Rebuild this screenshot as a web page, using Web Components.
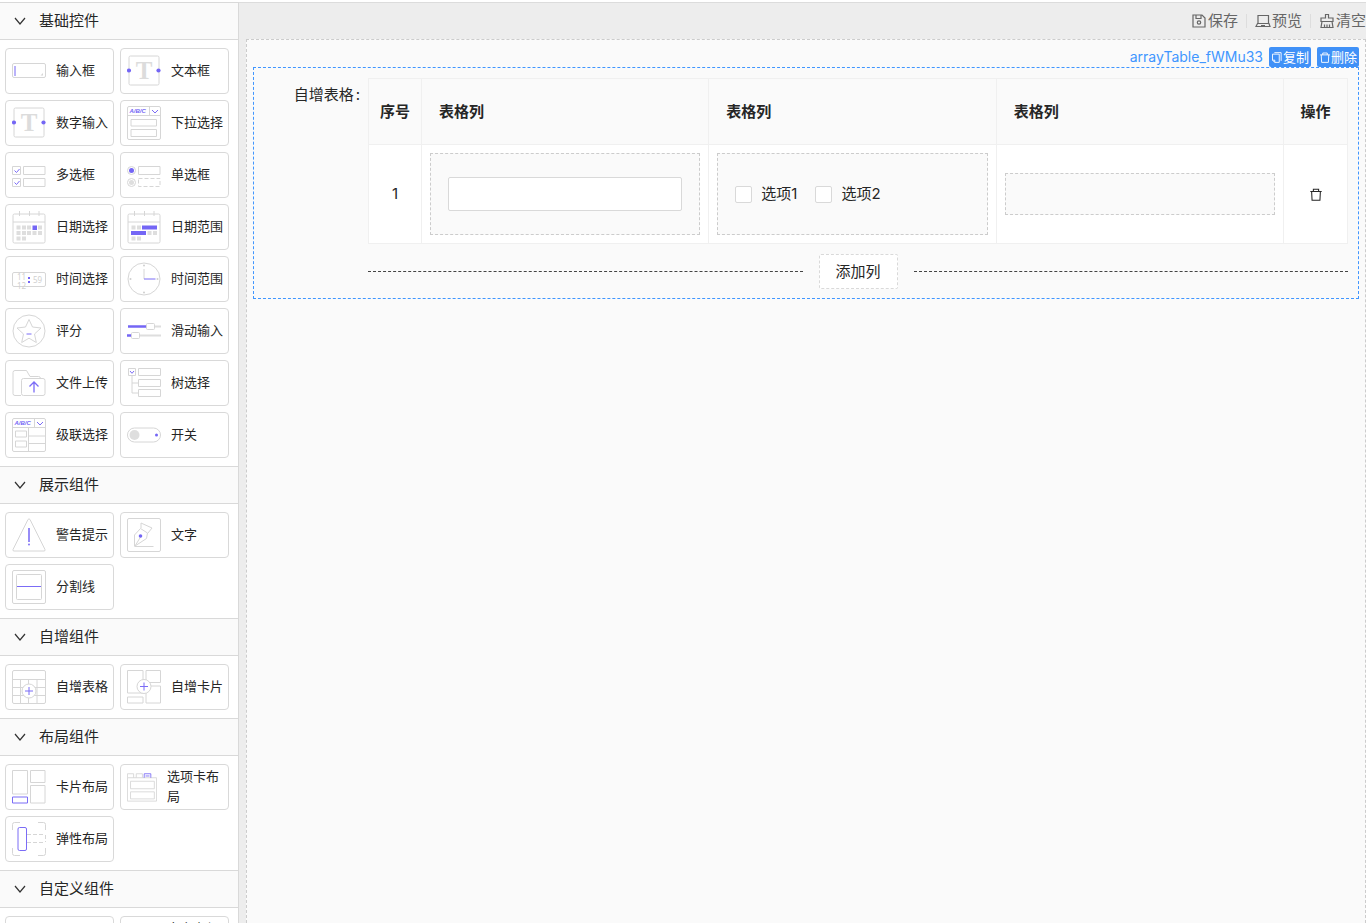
<!DOCTYPE html>
<html lang="zh-CN">
<head>
<meta charset="utf-8">
<title>表单设计器</title>
<style>
html, body { margin: 0; height: 100%; }
body { font: 15px/22px Inter, "Noto Sans CJK SC", sans-serif; color: #262626; overflow: hidden; }
</style>
</head>
<body>
<form-designer></form-designer>
<script>
const G = 'fill="none" stroke="#d6d6d6"';
const P = 'fill="none" stroke="#7b6cf6"';
const letterT = `<rect x="2" y="2" width="30" height="29" rx="1.5" ${G}/><text x="17" y="25" text-anchor="middle" font-family="Liberation Serif" font-weight="700" font-size="25" fill="#dcdcdc">T</text><circle cx="2" cy="16.500" r="2.100" fill="#7466f5"/><circle cx="31.500" cy="16.500" r="2.100" fill="#7466f5"/>`;
const abc = `<rect x=".5" y=".5" width="33" height="33" rx="1.500" ${G}/><path d="M.5 9.500H33.500M22.500.5V9.500" ${G}/><text x="2.500" y="7.200" font-family="Liberation Sans" font-style="italic" font-weight="700" font-size="6" fill="#7466f5">A/B/C</text><path d="M25 4l3 3 3-3" ${P}/>`;
const calendar = `<rect x="1" y="4" width="32" height="29" rx="1.500" ${G}/><path d="M1 12H33M7.500 1V6M17.500 1V6M27 1V6" ${G}/>`;
const squares = list => list.map(([x, y]) => `<rect x="${x}" y="${y}" width="4" height="4" fill="#dedede"/>`).join('');
const ICONS = {
  input: `<rect x=".5" y="9.500" width="33" height="14" rx="1.500" ${G}/><path d="M3 12V22" stroke="#7466f5"/><path d="M28.500 21.500l2.500-2.500v2.500z" fill="#d6d6d6"/>`,
  letter: letterT,
  select: abc + `<path d="M4 13.500H29.500V20H4zM4 23.500H29.500V30.500H4z" ${G}/>`,
  checks: `<path d="M.5 8.500h8v8h-8zM.5 20.500h8v8h-8zM11.500 8.500h21.500v8h-21.500zM11.500 20.500h21.500v8h-21.500z" ${G}/><path d="M2.500 12.500l2 2 3-3.500M2.500 24.500l2 2 3-3.500" ${P}/>`,
  radios: `<circle cx="4.500" cy="12.500" r="4" ${G}/><circle cx="4.500" cy="12.500" r="2.500" fill="#7466f5"/><circle cx="4.500" cy="24.500" r="4" ${G}/><circle cx="4.500" cy="24.500" r="2.500" fill="#dedede"/><path d="M11.500 8.500h21.500v8h-21.500z" ${G}/><path d="M11.500 20.500h21.500v8h-21.500z" ${G} stroke-dasharray="4 2"/>`,
  date: calendar + squares([[4.500,15.500],[10,15.500],[15,15.500],[26,15.500],[4.500,21],[10,21],[15,21],[20.500,21],[26,21],[4.500,26.500],[10,26.500]]) + `<rect x="20.500" y="15.500" width="4.500" height="4.500" fill="#7466f5"/>`,
  dates: calendar + squares([[4.500,15.500],[10,15.500],[20.500,21],[26,21],[4.500,26.500],[10,26.500]]) + `<path d="M15 15.500h15v4h-15zM4 21h15v4h-15z" fill="#7466f5"/>`,
  time: `<rect x=".5" y="10.500" width="33" height="14" rx="1.500" ${G}/><g font-family="Noto Sans" font-size="8" fill="#d0d0d0"><svg x="0" y="10" width="34" height="14"><text x="5" y="8">11</text><text x="5" y="17">12</text></svg><text x="21" y="20.500">59</text></g><path d="M16 15h2v2h-2zM16 19h2v2h-2z" fill="#7466f5"/>`,
  clock: `<circle cx="17" cy="17" r="16" ${G}/><path d="M17 7V17" ${G}/><path d="M17 17H28.500" ${P}/><g fill="#cfcfcf"><circle cx="17" cy="3.500" r="1"/><circle cx="17" cy="30.500" r="1"/><circle cx="3.500" cy="17" r="1"/><circle cx="30.500" cy="17" r="1"/></g>`,
  star: `<circle cx="17" cy="17" r="16" ${G}/><path d="M17 5.500l3.500 7.500 8.500 1-6.500 6 1.800 8.500-7.300-4.300-7.300 4.300 1.800-8.500-6.500-6 8.500-1z" ${G}/><path d="M14.500 20h5" ${P}/>`,
  sliders: `<path d="M1 12.500H19" stroke="#7466f5" stroke-width="2.500"/><path d="M28 12.500H34M13 21.500H34" stroke="#dedede" stroke-width="2"/><path d="M0 21.500H4.500" stroke="#7466f5" stroke-width="2.500"/><rect x="19.500" y="9.500" width="8" height="6" rx="1" ${G}/><rect x="4.500" y="18.500" width="8" height="6" rx="1" ${G}/>`,
  upload: `<path d="M9 29.500H3a2 2 0 0 1-2-2V6.500a2 2 0 0 1 2-2H14.500l3.500 6H26.500a2 2 0 0 1 2 2" ${G}/><rect x="9.500" y="12.500" width="23.500" height="17" rx="2" ${G}/><path d="M22 26.500V16.500M17.500 20.500l4.500-4.500 4.500 4.500" ${P} stroke-width="1.300"/>`,
  tree: `<path d="M1.500 2.500h7v7h-7zM11.500 2.500h22v7h-22zM11.500 13.500h22v7h-22zM11.500 23.500h22v7h-22zM5 9.500V27H11.500M5 17H11.500" ${G}/><path d="M3 5l2 2.300 2-2.300" ${P}/>`,
  cascade: abc + `<path d="M16.500 9.500V33.500M16.500 18H33.500M16.500 25.500H33.500M3.500 13h11v6h-11zM3.500 23h11v6h-11z" ${G}/>`,
  toggle: `<rect x=".5" y="10" width="33" height="14" rx="7" ${G}/><circle cx="7.500" cy="17" r="5" fill="#dedede"/><circle cx="29.500" cy="17" r="1.500" fill="#7466f5"/>`,
  alert: `<path d="M16 1.500q1-1.500 2 0L33 31.500q.5 1.500-1 1.500H2q-1.500 0-1-1.500z" ${G}/><path d="M17 10V24" stroke="#7466f5" stroke-width="1.500"/><circle cx="17" cy="26.500" r=".9" fill="#7466f5"/>`,
  pen: `<rect x=".5" y=".5" width="33" height="33" rx="1.500" ${G}/><path d="M7.500 28V17l6-6.500 7 4.500-1 5.500L8 28zM8 28l5.500-9M14 10V5l11 5-4 5M7.500 28.500H26.500" ${G}/><circle cx="13.500" cy="18" r="1.800" fill="#7466f5"/>`,
  divider: `<rect x=".5" y=".5" width="33" height="33" rx="1.500" ${G}/><rect x="4.500" y="4.500" width="25" height="25" rx="1" ${G}/><path d="M5 16.500H29" ${P}/>`,
  table: `<rect x=".5" y=".5" width="33" height="33" rx="1.500" ${G}/><path d="M.5 9.500H33.500M.5 17.500H33.500M.5 25.500H33.500M8.500 9.500V33M16.500 9.500V33M25 9.500V33" ${G}/><circle cx="17" cy="21" r="7" fill="#fff" stroke="#d6d6d6"/><path d="M17 17v8M13 21h8" ${P}/>`,
  cards: `<path d="M.5.5H16V23H.5zM19 .5H33.500V12.500H19zM.5 27H16V33H.5zM19 16H33.500V33H19z" ${G}/><circle cx="17" cy="16.500" r="7" fill="#fff" stroke="#d6d6d6"/><path d="M17 12.500v8M13 16.500h8" ${P}/>`,
  layout: `<path d="M.5.5H15.500V24H.5zM18.500.5H33V12.500H18.500zM18.500 15.500H33V33H18.500z" ${G}/><path d="M.5 27H15.500V33H.5z" ${P}/>`,
  tabs: `<path d="M.5 6.500H33.500V33H.5zM4 10.500H31V19H4zM4 22.500H31V30.500H4zM.5 6.500V2h7v4.500M10.500 6.500v-4.500h7v4.500" ${G}/><path d="M19.500 6.500V2h7.500v4.500M21 4.500h4.500" ${P}/>`,
  flex: `<path d="M.5 8V2.500a2 2 0 0 1 2-2H8M26 .5h5.500a2 2 0 0 1 2 2V8M.5 26v5.500a2 2 0 0 0 2 2H8M26 33.500h5.500a2 2 0 0 0 2-2V26" ${G}/><path d="M15 12.500H33M15 20.500H33M33.500 13V20" ${G} stroke-dasharray="4 2"/><rect x="6" y="5.500" width="8.500" height="23" rx="1.500" ${P}/>`
};
const SECTIONS = [
  ['基础控件', [['input','输入框'],['letter','文本框'],['letter','数字输入'],['select','下拉选择'],['checks','多选框'],['radios','单选框'],['date','日期选择'],['dates','日期范围'],['time','时间选择'],['clock','时间范围'],['star','评分'],['sliders','滑动输入'],['upload','文件上传'],['tree','树选择'],['cascade','级联选择'],['toggle','开关']]],
  ['展示组件', [['alert','警告提示'],['pen','文字'],['divider','分割线']]],
  ['自增组件', [['table','自增表格'],['cards','自增卡片']]],
  ['布局组件', [['layout','卡片布局'],['tabs','选项卡布局'],['flex','弹性布局']]],
  ['自定义组件', [['input','自定义'],['cards','自定义组件']]]
];
const ACTIONS = {
  save: '<path d="M2 2h9l3 3v9H2zM5 2v3.500h5V2"/><circle cx="8" cy="9.500" r="1.700"/>',
  preview: '<path d="M3 2.500h10.500v8H3zM1 13.500l1.500-3h11.500l1 3zM6 12.500h4"/>',
  clear: '<path d="M6.500 1.500h3V5H14v3.500H2V5h4.500zM3 8.500L2 14.500h12l-1-6M5.500 14.500V11.500M8 14.500V11.500M10.500 14.500V11.500"/>',
  copy: '<path d="M4.500 1.500h9v11M2 3.500h9v11H5L2 11.500zM2 11.500h3v3"/>',
  trash: '<path d="M1.500 4.500h13M5 4.500V2h6v2.500M3 4.500l.5 10h9l.5-10"/>'
};

class BaseElement extends HTMLElement {
  constructor() { super(); this.attachShadow({ mode: 'open' }); }
  connectedCallback() { this.shadowRoot.innerHTML = `<style>*{box-sizing:border-box}${this.css()}</style>${this.html()}`; }
}

customElements.define('line-icon', class extends BaseElement {
  css() { return `:host{display:block;flex:none;width:16px;height:16px}svg{display:block;width:100%;height:100%}`; }
  html() { return `<svg viewBox="0 0 16 16" fill="none" stroke="currentColor" stroke-width="1.200" aria-hidden="true">${ACTIONS[this.getAttribute('name')]}</svg>`; }
});

customElements.define('palette-item', class extends BaseElement {
  css() { return `:host{display:block;min-width:0}
    button{display:flex;align-items:center;gap:10px;width:100%;height:46px;padding:0 4px 0 6px;border:1px solid #d9d9d9;border-radius:4px;background:#fff;font:inherit;font-size:13px;line-height:20px;color:#262626;text-align:left;cursor:move}
    svg{display:block;flex:0 1 34px;min-width:0;height:34px}
    svg.wide{flex-basis:30px}
    span{flex:0 0 auto;max-width:52px;margin-bottom:2px}`; }
  html() {
    const label = this.getAttribute('label');
    return `<button type="button"><svg class="${label.length > 4 ? 'wide' : ''}" viewBox="0 0 34 34" aria-hidden="true">${ICONS[this.getAttribute('icon')]}</svg><span>${label}</span></button>`;
  }
});

customElements.define('palette-section', class extends BaseElement {
  css() { return `:host{display:block}
    .head{display:flex;align-items:center;gap:13px;width:100%;height:38px;padding:0 14px;border:solid #d9d9d9;border-width:1px 0;background:#fafafa;font:inherit;color:#262626;text-align:left}
    svg{width:12px;height:12px}
    .items{display:grid;grid-template-columns:1fr 1fr;gap:6px;padding:8px 9px 8px 5px}`; }
  html() { return `<button class="head" type="button" aria-expanded="true"><svg viewBox="0 0 12 12" fill="none" stroke="#333" stroke-width="1.200"><path d="M1 3l5 6 5-6"/></svg><span>${this.getAttribute('label')}</span></button><div class="items"><slot></slot></div>`; }
});

customElements.define('designer-toolbar', class extends BaseElement {
  css() { return `:host{display:flex;align-items:center;justify-content:flex-end;gap:8px;height:36px;color:#666}
    button{display:flex;align-items:center;gap:1px;padding:0;border:0;background:none;font:inherit;color:inherit}
    i{width:1px;height:14px;background:#ddd}`; }
  html() { return `<button type="button"><line-icon name="save"></line-icon>保存</button><i></i><button type="button"><line-icon name="preview"></line-icon>预览</button><i></i><button type="button"><line-icon name="clear"></line-icon>清空</button>`; }
});

customElements.define('array-table', class extends BaseElement {
  css() { return `:host{display:block}
    table{width:100%;border-collapse:collapse;table-layout:fixed;background:#fff}
    th,td{border:1px solid #f0f0f0;padding:8px}
    th{height:66px;background:#fafafa;font-weight:600;text-align:left;padding-left:17px}
    td{height:99px}
    .no{width:53px}.op{width:64px}
    .no,.op{text-align:center;padding:0}
    .zone{display:flex;align-items:center;gap:18px;min-height:42px;padding:0 17px;border:1px dashed #ccc;background:#fafafa}
    .filled{height:82px}
    input[type=text]{width:100%;height:34px;border:1px solid #d9d9d9;border-radius:2px;background:#fff;font:inherit;padding:4px 11px}
    label{display:flex;align-items:center;gap:9px}
    input[type=checkbox]{appearance:none;width:17px;height:17px;margin:0;border:1px solid #d9d9d9;border-radius:2px;background:#fff}
    td button{display:inline-flex;padding:0;border:0;background:none;color:#262626;vertical-align:middle}
    td line-icon{width:14px;height:15px}
    .add{display:flex;align-items:center;gap:16px;margin-top:10px}
    .add::before,.add::after{content:"";flex:1;border-top:1px dashed #444}
    .add button{height:35px;padding:0 16px;border:1px dashed #d9d9d9;border-radius:2px;background:#fff;font:inherit;color:#262626}`; }
  html() { return `<table><thead><tr><th class="no">序号</th><th>表格列</th><th>表格列</th><th>表格列</th><th class="op">操作</th></tr></thead>
    <tbody><tr><td class="no">1</td>
    <td><div class="zone filled"><input type="text" aria-label="表格列"></div></td>
    <td><div class="zone filled"><label><input type="checkbox">选项1</label><label><input type="checkbox">选项2</label></div></td>
    <td><div class="zone"></div></td>
    <td class="op"><button type="button" aria-label="删除"><line-icon name="trash"></line-icon></button></td></tr></tbody></table>
    <div class="add"><button type="button">添加列</button></div>`; }
});

customElements.define('selected-field', class extends BaseElement {
  css() { return `:host{display:block}
    .bar{display:flex;justify-content:flex-end;align-items:center;gap:6px;height:20px;color:#4096ff}
    .bar button{display:flex;align-items:center;gap:0;height:20px;padding:0 2px;border:0;border-radius:2px;background:#4091f7;color:#fff;font:inherit;font-size:13px;line-height:20px}
    .name{font-size:14px}
    .bar line-icon{width:12px;height:13px}
    .box{display:grid;grid-template-columns:106px minmax(0,1fr);gap:8px;padding:10px 10px 9px 0;border:1px dashed #4096ff}
    .label{display:flex;justify-content:flex-end;gap:2px;line-height:34px}`; }
  html() { return `<div class="bar"><span class="name">arrayTable_fWMu33</span><button type="button"><line-icon name="copy"></line-icon>复制</button><button type="button"><line-icon name="trash"></line-icon>删除</button></div>
    <div class="box"><div class="label"><span>自增表格</span><span>:</span></div><array-table></array-table></div>`; }
});

customElements.define('form-designer', class extends BaseElement {
  css() { return `:host{display:flex;height:100%;padding-top:2px;box-sizing:border-box;overflow:hidden}
    aside{flex:none;width:239px;border-right:1px solid #d9d9d9;background:#fff}
    main{flex:1;min-width:0;display:flex;flex-direction:column;background:#ededed;border-top:1px solid #dcdcdc}
    .canvas{flex:1;margin-left:7px;padding:7px 6px 6px;border:1px dashed #ccc;border-bottom:0;background:#fafafa}`; }
  html() {
    const items = list => list.map(([i, l]) => `<palette-item icon="${i}" label="${l}"></palette-item>`).join('');
    return `<aside>${SECTIONS.map(([l, list]) => `<palette-section label="${l}">${items(list)}</palette-section>`).join('')}</aside>
    <main><designer-toolbar></designer-toolbar><div class="canvas"><selected-field></selected-field></div></main>`;
  }
});
</script>
</body>
</html>
